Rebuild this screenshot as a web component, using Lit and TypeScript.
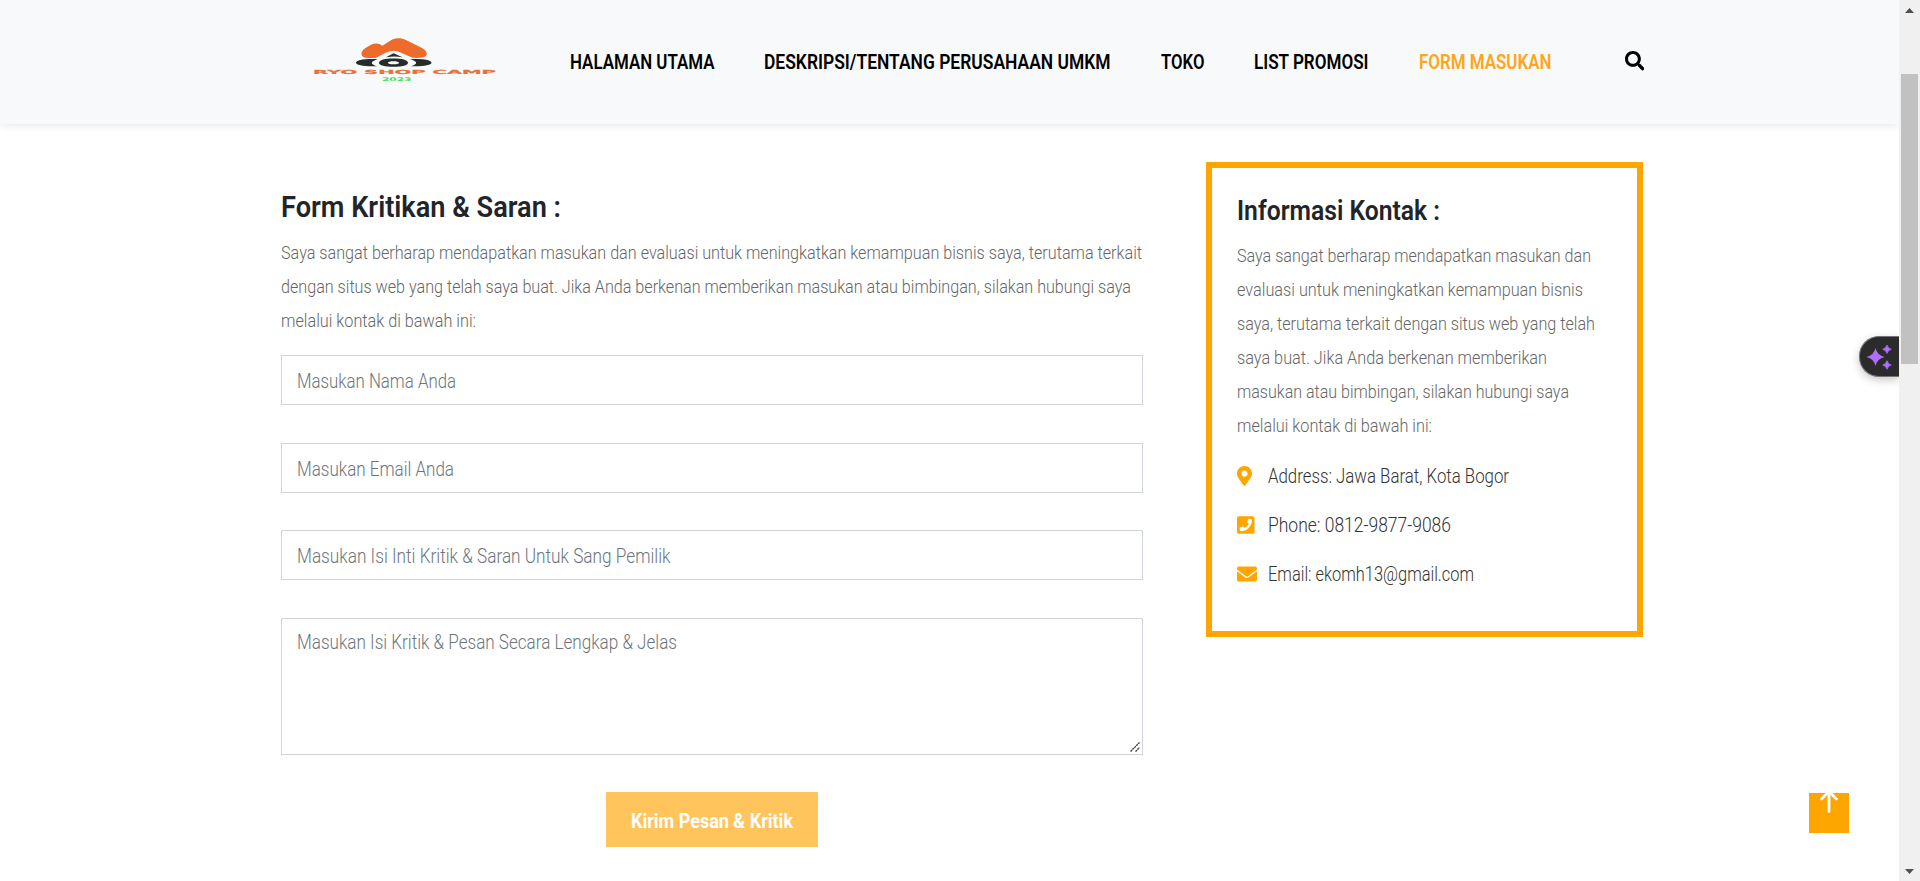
import { LitElement, html, svg, css } from "lit";
import { customElement, property } from "lit/decorators.js";

/** One line of text set to an exact measure. */
@customElement("fit-text")
class FitText extends LitElement {
  @property() text = "";
  @property({ type: Number }) w = 100;
  @property({ type: Number }) h = 34;
  @property({ type: Number }) base = 24;
  static styles = css`
    :host { display: block; flex: none; }
    svg { display: block; overflow: visible; }
    text { fill: currentColor; }
  `;
  render() {
    return html`<svg width=${this.w} height=${this.h}>
      ${svg`<text x="0" y=${this.base} textLength=${this.w} lengthAdjust="spacingAndGlyphs">${this.text}</text>`}
    </svg>`;
  }
}

type Line = [string, number];

const NAV: Line[] = [
  ["HALAMAN UTAMA", 144.5],
  ["DESKRIPSI/TENTANG PERUSAHAAN UMKM", 346.5],
  ["TOKO", 43.5],
  ["LIST PROMOSI", 114.5],
  ["FORM MASUKAN", 132.5],
];

const INTRO: Line[] = [
  ["Saya sangat berharap mendapatkan masukan dan evaluasi untuk meningkatkan kemampuan bisnis saya, terutama terkait", 861],
  ["dengan situs web yang telah saya buat. Jika Anda berkenan memberikan masukan atau bimbingan, silakan hubungi saya", 850],
  ["melalui kontak di bawah ini:", 195],
];

const CONTACT: Line[] = [
  ["Saya sangat berharap mendapatkan masukan dan", 354],
  ["evaluasi untuk meningkatkan kemampuan bisnis", 346],
  ["saya, terutama terkait dengan situs web yang telah", 358],
  ["saya buat. Jika Anda berkenan memberikan", 310],
  ["masukan atau bimbingan, silakan hubungi saya", 332],
  ["melalui kontak di bawah ini:", 195],
];

const FIELDS: Line[] = [
  ["Masukan Nama Anda", 159],
  ["Masukan Email Anda", 157],
  ["Masukan Isi Inti Kritik & Saran Untuk Sang Pemilik", 373.5],
];

const PIN = html`<svg class="ico" width="15" height="20" viewBox="0 0 384 512"><path d="M172.268 501.67C26.97 291.031 0 269.413 0 192 0 85.961 85.961 0 192 0s192 85.961 192 192c0 77.413-26.97 99.031-172.268 309.67-9.535 13.774-29.93 13.773-39.464 0zM192 272c44.183 0 80-35.817 80-80s-35.817-80-80-80-80 35.817-80 80 35.817 80 80 80z"/></svg>`;
const PHONE = html`<svg class="ico" width="17.5" height="20" viewBox="0 0 448 512"><path d="M400 32H48A48 48 0 0 0 0 80v352a48 48 0 0 0 48 48h352a48 48 0 0 0 48-48V80a48 48 0 0 0-48-48zM94 416c-7.033 0-13.057-4.873-14.616-11.627l-14.998-65a15 15 0 0 1 8.707-17.16l69.998-29.999a15 15 0 0 1 17.518 4.289l30.997 37.885c48.944-22.963 88.297-62.858 110.781-110.78l-37.886-30.997a15.001 15.001 0 0 1-4.289-17.518l30-69.998a15 15 0 0 1 17.16-8.707l65 14.998A14.997 14.997 0 0 1 384 126c0 160.292-129.945 290-290 290z"/></svg>`;
const MAIL = html`<svg class="ico" width="20" height="20" viewBox="0 0 512 512"><path d="M502.3 190.8c3.9-3.1 9.7-.2 9.7 4.7V400c0 26.5-21.5 48-48 48H48c-26.500 0-48-21.500-48-48V195.600c0-5 5.700-7.800 9.700-4.700 22.400 17.400 52.100 39.500 154.100 113.600 21.100 15.400 56.700 47.800 92.200 47.600 35.700.3 72-32.800 92.300-47.600 102-74.100 131.600-96.300 154-113.700zM256 320c23.200.4 56.600-29.200 73.400-41.400 132.700-96.300 142.800-104.700 173.400-128.700 5.800-4.500 9.200-11.500 9.200-18.900v-19c0-26.500-21.500-48-48-48H48c-26.500 0-48 21.500-48 48v19c0 7.400 3.400 14.300 9.200 18.900 30.600 23.900 40.700 32.400 173.400 128.700 16.800 12.200 50.200 41.800 73.400 41.400z"/></svg>`;

const ROWS: [unknown, string, number][] = [
  [PIN, "Address: Jawa Barat, Kota Bogor", 241],
  [PHONE, "Phone: 0812-9877-9086", 183],
  [MAIL, "Email: ekomh13@gmail.com", 206],
];

@customElement("app-root")
class AppRoot extends LitElement {
  static styles = css`
    :host { display: block; font-family: Roboto, "Open Sans", sans-serif; }
    * { box-sizing: border-box; }
    svg { display: block; flex: none; }
    .page { display: flex; height: 881px; overflow: hidden; background: #fff; }
    .view { flex: 1; min-width: 0; overflow: hidden; }
    header {
      height: 124px; background: #f8f9fb; display: flex; padding: 0 255px 0 300px;
      box-shadow: 0 0 10px rgba(0, 0, 0, 0.12);
    }
    .brand { padding-top: 30px; width: 269.5px; }
    nav { display: flex; gap: 50px; font-size: 19.7px; font-weight: 600; color: #000; }
    nav .active { color: #ffa51a; }
    .search { margin: 51px 0 0 auto; }
    main { display: flex; gap: 63px; padding: 38px 0 0 281px; }
    .form { width: 862px; }
    .title { color: #212529; font-size: 29.5px; font-weight: 600; }
    .card .title { font-size: 27px; }
    .copy { color: #666; font-size: 19px; font-weight: 300; }
    form { margin-top: 18px; display: flex; flex-direction: column; gap: 37.6px; }
    .field {
      height: 50px; border: 1px solid #ced4da; padding-left: 15px; color: #6c757d;
      font-size: 20px; font-weight: 300; display: flex; justify-content: space-between;
    }
    .area { height: 137px; }
    .grip { align-self: flex-end; margin: 0 2px 2px 0; }
    .send {
      align-self: center; width: 212px; height: 55px; border: 0; padding: 0 25px;
      background: #ffc55c; color: #fff; font: 700 20px Roboto, sans-serif;
    }
    .card { width: 437px; height: 475px; border: 6px solid #ffa500; padding-left: 25px; }
    .rows { display: flex; flex-direction: column; gap: 9px; margin-top: 14px; font-size: 20px; font-weight: 300; color: #333; }
    .row { display: flex; align-items: center; height: 40px; }
    .mark { width: 30.7px; }
    .ico { fill: #ffa500; }
    .bar {
      width: 21px; background: #f0f0f0; display: flex; flex-direction: column;
      align-items: center; padding: 8px 0 7px;
    }
    .thumb { width: 17px; height: 290px; margin-top: 61px; background: #c1c1c1; }
    .down { margin-top: auto; }
    .assist {
      position: absolute; left: 1859px; top: 336px; width: 40px; height: 41px;
      background: #2b2b2b; border: 1px solid #77727a; border-width: 1px 0 1px 1px;
      border-radius: 20px 0 0 20px; clip-path: inset(-20px 0 -20px -20px);
      box-shadow: 0 3px 8px rgba(0, 0, 0, 0.22);
    }
    .top { position: absolute; left: 1809px; top: 793px; width: 40px; height: 40px; background: #ffa500; }
    .ryo { font: 700 5.6px "DejaVu Sans", sans-serif; fill: #e8703a; stroke: #e8703a; stroke-width: 0.2px; }
    .year { font: 700 5px "DejaVu Sans", sans-serif; fill: #45e05a; }
  `;

  private lines(list: Line[], h: number, base: number) {
    return list.map(([t, w]) => html`<fit-text .text=${t} .w=${w} .h=${h} .base=${base}></fit-text>`);
  }

  private logo() {
    return html`<svg width="220" height="60" viewBox="0 0 220 60">
      <path fill="#ee6b2b" d="M61.500 24.500C61 22 62.500 20 65 18.200L71 14.800C74 13.200 77.500 13 80 14.300L82.300 15.800 91 10.200C96 7.600 101 7.600 106 10L122 18C126 20.300 127.500 22.500 126.500 25 125.500 27.600 121 28.200 112.500 27.800L107 25.300C102 23 98 21.200 93.500 20.800 89 21.200 84 23.300 79 26.300L75.500 28H68C64 27.800 61.800 27 61.500 24.500z"/>
      <path fill="#262b2c" d="M86 27.200 93.500 23.300 102.500 27.200q-8-1.200-16.500 0z"/>
      <path fill="#262b2c" fill-rule="evenodd" d="M79 32.700c0-2.700 6-4.200 14.500-4.200s14.500 1.500 14.500 4.200-6 4.100-14.500 4.100S79 35.400 79 32.700zm9 0c0 1 2.500 1.500 5.500 1.500s5.500-.5 5.500-1.500-2.500-1.500-5.500-1.500-5.500.5-5.500 1.500z"/>
      <path fill="#262b2c" d="M78 29.200c-13-.7-22 1-22 3.500s9 4 21 3.500c-7-2-7-5 1-7zM110 29.200c13-.7 21.500 1 21.500 3.500s-9 4-20.500 3.500c7-2 7-5-1-7z"/>
      <text class="ryo" x="13" y="43.800" textLength="183" lengthAdjust="spacingAndGlyphs">RYO SHOP CAMP</text>
      <text class="year" x="82" y="50.500" textLength="29.500" lengthAdjust="spacingAndGlyphs">2023</text>
    </svg>`;
  }

  render() {
    return html`
      <div class="page">
        <div class="view">
          <header>
            <div class="brand">${this.logo()}</div>
            <nav>
              ${NAV.map(([t, w], i) => html`<fit-text class=${i === 4 ? "active" : ""} .text=${t} .w=${w} .h=${124} .base=${69}></fit-text>`)}
            </nav>
            <svg class="search" width="19.500" height="19.500" viewBox="0 0 512 512"><path d="M505 442.700 405.300 343c-4.500-4.500-10.600-7-17-7H372c27.600-35.300 44-79.700 44-128C416 93.100 322.900 0 208 0S0 93.100 0 208s93.100 208 208 208c48.300 0 92.700-16.400 128-44v16.300c0 6.400 2.500 12.500 7 17l99.700 99.700c9.400 9.400 24.600 9.400 33.900 0l28.300-28.300c9.400-9.400 9.400-24.600.1-34zM208 336c-70.700 0-128-57.200-128-128 0-70.700 57.200-128 128-128 70.700 0 128 57.200 128 128 0 70.700-57.200 128-128 128z"/></svg>
          </header>
          <main>
            <section class="form">
              <fit-text class="title" .text=${"Form Kritikan & Saran :"} .w=${280} .h=${73} .base=${54.7}></fit-text>
              <div class="copy">${this.lines(INTRO, 34, 24)}</div>
              <form>
                ${FIELDS.map((f) => html`<div class="field">${this.lines([f], 48, 32)}</div>`)}
                <div class="field area">
                  ${this.lines([["Masukan Isi Kritik & Pesan Secara Lengkap & Jelas", 380]], 48, 30)}
                  <svg class="grip" width="10" height="10" viewBox="0 0 10 10"><path d="M0.500 9.500 9.500 0.500M5.500 9.500 9.500 5.500" stroke="#444" stroke-width="1.400" stroke-dasharray="2.200 .5"/></svg>
                </div>
                <button class="send" type="button">
                  <fit-text .text=${"Kirim Pesan & Kritik"} .w=${162} .h=${55} .base=${35.5}></fit-text>
                </button>
              </form>
            </section>
            <aside class="card">
              <fit-text class="title" .text=${"Informasi Kontak :"} .w=${203} .h=${70} .base=${51.7}></fit-text>
              <div class="copy">${this.lines(CONTACT, 34, 24)}</div>
              <div class="rows">
                ${ROWS.map(([icon, t, w]) => html`<div class="row"><div class="mark">${icon}</div>${this.lines([[t, w]], 40, 26.5)}</div>`)}
              </div>
            </aside>
          </main>
        </div>
        <div class="bar">
          <svg width="9" height="5"><path d="M0 5 4.500 0 9 5z" fill="#505050"/></svg>
          <div class="thumb"></div>
          <svg class="down" width="9" height="5"><path d="M0 0 4.500 5 9 0z" fill="#505050"/></svg>
        </div>
      </div>
      <div class="assist">
        <svg width="39" height="39" viewBox="0 0 39 39" fill="#b06eff">
          <path d="M15.500 11q1.700 7.300 9 9-7.300 1.700-9 9-1.700-7.300-9-9 7.300-1.700 9-9z"/>
          <path d="M27 8q.9 3.400 4.300 4.300-3.400.9-4.300 4.300-.9-3.400-4.300-4.300 3.400-.9 4.300-4.300zM27 23.700q.9 3.400 4.300 4.300-3.400.9-4.300 4.300-.9-3.400-4.300-4.300 3.400-.9 4.300-4.300z" stroke="#b06eff" stroke-width="0.700"/>
        </svg>
      </div>
      <div class="top">
        <svg width="40" height="40" viewBox="0 0 40 40" fill="none" stroke="#fff" stroke-width="2.800" stroke-linecap="round"><path d="M20 0v18.500M12.500 6 20-1.500 27.500 6"/></svg>
      </div>
    `;
  }
}
